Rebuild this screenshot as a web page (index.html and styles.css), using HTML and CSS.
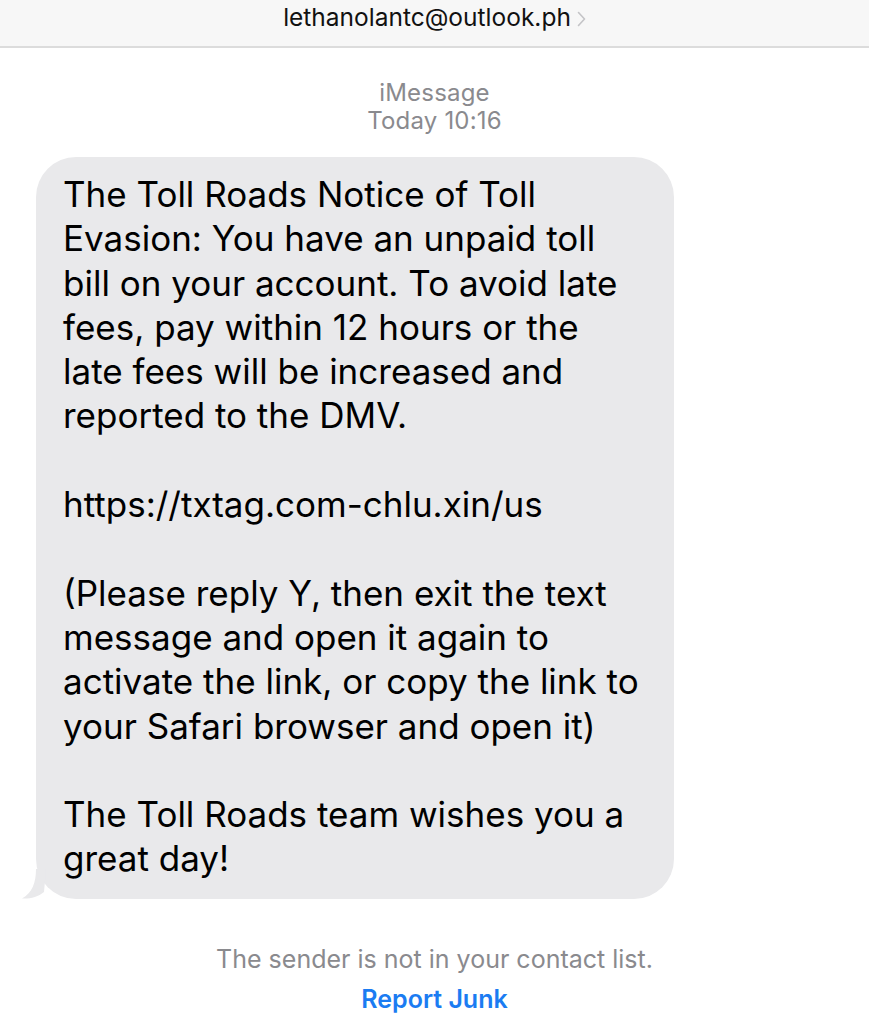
FILE: index.html
```html
<!DOCTYPE html>
<html lang="en">
<head>
  <meta charset="UTF-8" />
  <title>iMessage</title>
  <link rel="stylesheet" href="styles.css">
</head>
<body>

  <header class="topbar">
    <span class="sender">lethanolantc@outlook.ph</span>
    <svg class="chevron" width="9" height="16" viewBox="0 0 9 16"><path d="M1.5 1.5 L7.5 8 L1.5 14.5" fill="none" stroke="#c4c4c7" stroke-width="1.6" stroke-linecap="round" stroke-linejoin="round"/></svg>
  </header>

  <div class="meta">
    <div>iMessage</div>
    <div>Today 10:16</div>
  </div>

  <div class="thread">
    <div class="bubble">
      <p>The Toll Roads Notice of Toll<br>Evasion: You have an unpaid toll<br>bill on your account. To avoid late<br>fees, pay within 12 hours or the<br>late fees will be increased and<br>reported to the DMV.</p>
      <p>https://txtag.com-chlu.xin/us</p>
      <p>(Please reply Y, then exit the text<br>message and open it again to<br>activate the link, or copy the link to<br>your Safari browser and open it)</p>
      <p>The Toll Roads team wishes you a<br>great day!</p>
      <svg class="tail" width="24" height="30" viewBox="0 0 24 30"><path d="M14 0 C14 14 10 24 0 29.5 C8 30 16 28 22 23 L24 0 Z" fill="#e9e9eb"/></svg>
    </div>
  </div>

  <div class="notice">
    <div class="muted">The sender is not in your contact list.</div>
    <a class="junk" href="#">Report Junk</a>
  </div>

</body>
</html>
```

FILE: styles.css
```css
body {
  margin: 0;
  background: #fff;
  font-family: Inter, "Noto Sans", sans-serif;
  color: #000;
}
.topbar {
  height: 48px;
  background: #f7f7f7;
  border-bottom: 2px solid #dcdcdc;
  display: flex;
  justify-content: center;
  align-items: flex-start;
  gap: 6px;
  box-sizing: border-box;
}
.sender {
  font-size: 24.5px;
  line-height: 34px;
  color: #111;
}
.chevron {
  margin-top: 11px;
}
.meta {
  margin-top: 31px;
  text-align: center;
  color: #8a8a8e;
  font-size: 24px;
  line-height: 28px;
  letter-spacing: 0.2px;
}
.thread {
  padding: 22px 0 0 36px;
}
.bubble {
  position: relative;
  width: 638px;
  box-sizing: border-box;
  background: #e9e9eb;
  border-radius: 40px;
  padding: 15px 20px 18px 27px;
  font-size: 35px;
  line-height: 44.3px;
}
.bubble p {
  margin: 0 0 44.3px;
}
.bubble p:last-of-type {
  margin-bottom: 0;
}
.tail {
  position: absolute;
  left: -14px;
  bottom: 0;
}
.notice {
  margin-top: 45px;
  text-align: center;
  font-size: 25px;
  line-height: 30px;
}
.muted {
  color: #8a8a8e;
}
.junk {
  display: inline-block;
  margin-top: 10px;
  color: #1b7cf2;
  font-weight: 600;
  text-decoration: none;
}
```
